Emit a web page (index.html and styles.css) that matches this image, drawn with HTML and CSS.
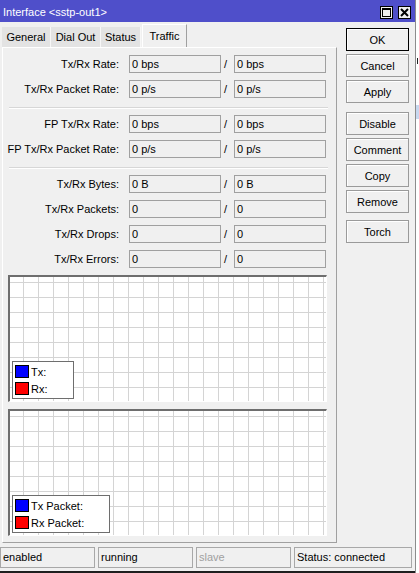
FILE: index.html
```html
<!DOCTYPE html>
<html lang="en">
<head>
    <meta charset="UTF-8">
    <meta name="viewport" content="width=device-width, initial-scale=1.0">
    <title>Interface &lt;sstp-out1&gt;</title>
    <link rel="stylesheet" href="styles.css">
</head>
<body>

<div class="desk">
    <div class="window">
        <div class="titlebar">
            <span class="title">Interface &lt;sstp-out1&gt;</span>
            <div class="tb-buttons">
                <span class="tb-btn">
                    <svg width="11" height="11" viewBox="0 0 11 11"><rect x="1.5" y="1.5" width="8" height="8" fill="none" stroke="#000" stroke-width="1"/><rect x="1" y="1" width="9" height="2" fill="#000"/></svg>
                </span>
                <span class="tb-btn">
                    <svg width="11" height="11" viewBox="0 0 11 11"><path d="M2 2 L9 9 M9 2 L2 9" stroke="#000" stroke-width="2"/></svg>
                </span>
            </div>
        </div>

        <div class="main">
            <div class="left">
                <div class="tabs">
                    <div class="tab" style="width:49px">General</div>
                    <div class="tab" style="width:50px">Dial Out</div>
                    <div class="tab" style="width:40px">Status</div>
                    <div class="tab active" style="width:45px">Traffic</div>
                </div>

                <div class="panel">
                    <div class="row"><label>Tx/Rx Rate:</label><div class="field">0 bps</div><span class="slash">/</span><div class="field">0 bps</div></div>
                    <div class="row"><label>Tx/Rx Packet Rate:</label><div class="field">0 p/s</div><span class="slash">/</span><div class="field">0 p/s</div></div>
                    <div class="sep"></div>
                    <div class="row"><label>FP Tx/Rx Rate:</label><div class="field">0 bps</div><span class="slash">/</span><div class="field">0 bps</div></div>
                    <div class="row"><label>FP Tx/Rx Packet Rate:</label><div class="field">0 p/s</div><span class="slash">/</span><div class="field">0 p/s</div></div>
                    <div class="sep"></div>
                    <div class="row"><label>Tx/Rx Bytes:</label><div class="field">0 B</div><span class="slash">/</span><div class="field">0 B</div></div>
                    <div class="row"><label>Tx/Rx Packets:</label><div class="field">0</div><span class="slash">/</span><div class="field">0</div></div>
                    <div class="row"><label>Tx/Rx Drops:</label><div class="field">0</div><span class="slash">/</span><div class="field">0</div></div>
                    <div class="row"><label>Tx/Rx Errors:</label><div class="field">0</div><span class="slash">/</span><div class="field">0</div></div>

                    <div class="graph">
                        <div class="legend">
                            <div class="legend-item"><span class="swatch tx"></span>Tx:</div>
                            <div class="legend-item"><span class="swatch rx"></span>Rx:</div>
                        </div>
                    </div>
                    <div class="graph">
                        <div class="legend">
                            <div class="legend-item"><span class="swatch tx"></span>Tx Packet:</div>
                            <div class="legend-item"><span class="swatch rx"></span>Rx Packet:</div>
                        </div>
                    </div>
                </div>
            </div>

            <div class="buttons">
                <button class="default">OK</button>
                <button>Cancel</button>
                <button>Apply</button>
                <button class="spaced">Disable</button>
                <button>Comment</button>
                <button>Copy</button>
                <button>Remove</button>
                <button class="spaced-sm">Torch</button>
            </div>
        </div>

        <div class="statusbar">
            <div class="cell">enabled</div>
            <div class="cell">running</div>
            <div class="cell dim">slave</div>
            <div class="cell wide">Status: connected</div>
        </div>
    </div>

    <div class="behind">
        <div class="mark"></div>
        <div class="blue"></div>
    </div>
</div>

</body>
</html>
```

FILE: styles.css
```css
body {
    margin: 0;
    background: #ffffff;
    font-family: "Liberation Sans", Arial, sans-serif;
    font-size: 11px;
    color: #000;
}
.desk {
    display: flex;
    height: 573px;
    overflow: hidden;
}
.window {
    width: 415px;
    height: 573px;
    background: #f0f0f0;
    border-right: 1px solid #8c8c8c;
    display: flex;
    flex-direction: column;
}

/* title bar */
.titlebar {
    height: 22px;
    background: #4f4fca;
    display: flex;
    align-items: center;
    justify-content: space-between;
    padding: 0 4px 0 3px;
    flex-shrink: 0;
}
.title {
    color: #fff;
    font-size: 11px;
    padding-top: 2px;
}
.tb-buttons {
    display: flex;
    gap: 5px;
    padding-top: 2px;
}
.tb-btn {
    width: 11px;
    height: 11px;
    border: 1px solid #000;
    background: #f0f0f0;
    display: flex;
}

/* tabs + panel */
.main {
    display: flex;
    flex: 1;
}
.left {
    width: 337px;
}
.tabs {
    display: flex;
    align-items: flex-end;
    height: 25px;
    padding-left: 2px;
}
.tab {
    height: 20px;
    line-height: 20px;
    text-align: center;
    background: #e3e3e3;
    border-right: 1px solid #f7f7f7;
    box-sizing: border-box;
}
.tab.active {
    height: 23px;
    line-height: 22px;
    margin-left: 1px;
    background: #f0f0f0;
    border-top: 1px solid #fff;
    border-left: 1px solid #fff;
    border-right: 1px solid #a0a0a0;
}
.panel {
    margin-left: 2px;
    width: 335px;
    box-sizing: border-box;
    border-top: 1px solid #fff;
    border-left: 1px solid #fff;
    border-right: 1px solid #a0a0a0;
    border-bottom: 1px solid #a0a0a0;
    padding: 7px 0 6px;
}
.row {
    display: flex;
    align-items: center;
    height: 18px;
    margin-bottom: 7px;
}
.row label {
    width: 116px;
    text-align: right;
    margin-right: 10px;
}
.field {
    width: 92px;
    height: 18px;
    line-height: 16px;
    box-sizing: border-box;
    border: 1px solid #a0a0a0;
    background: #f0f0f0;
    padding-left: 2px;
}
.slash {
    width: 10px;
    padding-left: 3px;
}
/* row margin (7px) collapses into this one */
.sep {
    margin: 9px 8px 6px 6px;
    border-top: 1px solid #d7d7d7;
    border-bottom: 1px solid #fff;
}

/* graphs */
.graph {
    position: relative;
    margin: 0 0 7px 5px;
    width: 319px;
    height: 127px;
    box-sizing: border-box;
    border-style: solid;
    border-width: 2px 1px 1px 2px;
    border-color: #6e6e6e #fff #fff #6e6e6e;
    background-color: #fff;
    background-image:
        linear-gradient(to right, #d4d4d4 1px, transparent 1px),
        linear-gradient(to bottom, #d4d4d4 1px, transparent 1px);
    background-size: 15px 15px;
    background-position: 13px 5px;
}
.graph:last-child {
    margin-bottom: 0;
}
.legend {
    position: absolute;
    left: 2px;
    bottom: 2px;
    background: #fff;
    border: 1px solid #6e6e6e;
    padding: 3px 25px 3px 2px;
    display: flex;
    flex-direction: column;
    gap: 4px;
}
.legend-item {
    display: flex;
    align-items: center;
    height: 13px;
    gap: 2px;
}
.swatch {
    width: 12px;
    height: 11px;
    border: 1px solid #000;
}
.swatch.tx { background: #0000ff; }
.swatch.rx { background: #ff0000; }

/* right buttons */
.buttons {
    margin-left: 9px;
    padding-top: 6px;
    display: flex;
    flex-direction: column;
    gap: 3px;
}
button {
    width: 63px;
    height: 23px;
    font-family: inherit;
    font-size: 11px;
    color: #000;
    background: #f0f0f0;
    border: 1px solid #9a9a9a;
    box-shadow: inset 1px 1px 0 #fff;
    padding: 0;
}
button.default {
    border-color: #000;
}
button.spaced {
    margin-top: 6px;
}
button.spaced-sm {
    margin-top: 4px;
}

/* status bar */
.statusbar {
    display: flex;
    gap: 3px;
    padding: 4px 0 3px 0;
    height: 21px;
    border-bottom: 2px solid #1e1e1e;
}
.cell {
    width: 95px;
    height: 21px;
    line-height: 19px;
    box-sizing: border-box;
    border: 1px solid #a8a8a8;
    padding-left: 2px;
}
.cell.dim {
    color: #a0a0a0;
}
.cell.wide {
    width: 118px;
}

/* window behind */
.behind {
    width: 3px;
    position: relative;
}
.mark {
    position: absolute;
    left: 1px;
    top: 58px;
    width: 1px;
    height: 6px;
    background: #222;
}
.blue {
    position: absolute;
    left: 0;
    top: 105px;
    width: 3px;
    height: 14px;
    background: #c8d8f0;
}
```
